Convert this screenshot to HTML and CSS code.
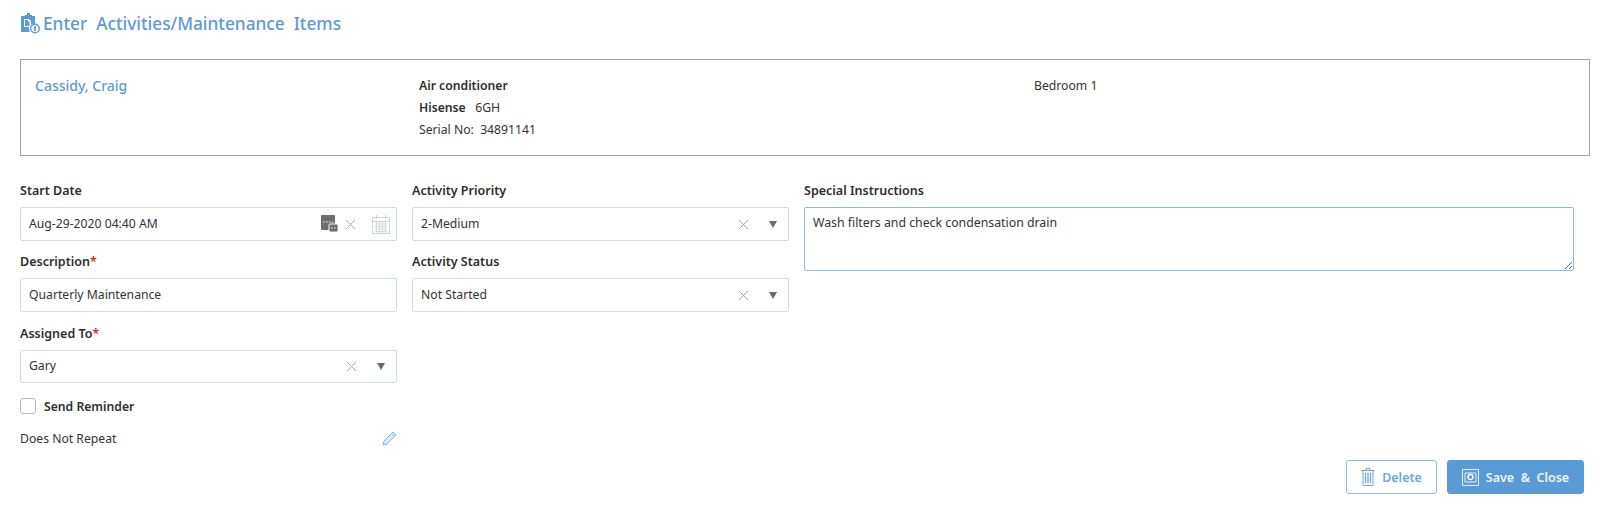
FILE: index.html
```html
<!DOCTYPE html>
<html lang="en">
<head>
    <meta charset="UTF-8">
    <title>Enter Activities/Maintenance Items</title>
    <link rel="stylesheet" href="styles.css">
</head>
<body>
    <h1 class="title">
        <svg class="title-icon" width="20" height="21" viewBox="0 0 20 21">
            <path fill="#5b9bd5" d="M2 3h3V2h2V0h3v2h2v1h3v8a5 5 0 0 0-5 8H2a1 1 0 0 1-1-1V4a1 1 0 0 1 1-1z"/>
            <path fill="#fff" d="M4 6h5l2 2v6H4z"/>
            <path fill="#5b9bd5" d="M5 7h3v1.500h1.500V13H5z"/>
            <circle cx="15" cy="15.500" r="4.300" fill="#fff" stroke="#5b9bd5" stroke-width="1.400"/>
            <path stroke="#5b9bd5" stroke-width="1.800" d="M15 13v5"/>
        </svg>
        <span>Enter&nbsp; Activities/Maintenance&nbsp; Items</span>
    </h1>

    <div class="info-box">
        <a class="info-name">Cassidy, Craig</a>
        <div class="info-item">
            <div class="strong">Air conditioner</div>
            <div><span class="strong">Hisense</span>&nbsp;&nbsp; 6GH</div>
            <div>Serial No:&nbsp; 34891141</div>
        </div>
        <div class="info-room">Bedroom 1</div>
    </div>

    <div class="form">
        <div class="col">
            <label>Start Date</label>
            <div class="field">
                <span class="value">Aug-29-2020 04:40 AM</span>
                <svg class="tz-icon" width="17" height="18" viewBox="0 0 17 18">
                    <path fill="#6d6d6d" d="M1 0h12a1 1 0 0 1 1 1v10H9v4H1a1 1 0 0 1-1-1V1a1 1 0 0 1 1-1z"/>
                    <rect x="8" y="9" width="9" height="8" rx="1" fill="#6d6d6d" stroke="#fff"/>
                    <path stroke="#fff" stroke-dasharray="1.500 1.500" d="M2 7h10M10 13h6"/>
                </svg>
                <svg class="x-icon" width="11" height="11" viewBox="0 0 11 11"><path d="M1 1l9 9M10 1l-9 9"/></svg>
                <svg class="cal-icon" width="18" height="20" viewBox="0 0 18 20">
                    <path fill="none" stroke="#cfd4d8" d="M.5 3.500h17v16H.500zM.5 7.500h17M4.500 1v4M13.500 1v4"/>
                    <path fill="none" stroke="#d5d9dc" d="M3 10h12M3 12.500h12M3 15h12M3 17.500h12M4.500 8v11M7.500 8v11M10.500 8v11M13.500 8v11"/>
                </svg>
            </div>
            <label>Description<span class="req">*</span></label>
            <div class="field desc"><span class="value">Quarterly Maintenance</span></div>
            <label>Assigned To<span class="req">*</span></label>
            <div class="field short">
                <span class="value">Gary</span>
                <svg class="x-icon" width="11" height="11" viewBox="0 0 11 11"><path d="M1 1l9 9M10 1l-9 9"/></svg>
                <span class="caret"></span>
            </div>
            <div class="check-row">
                <span class="checkbox"></span>
                <span class="strong">Send Reminder</span>
            </div>
            <div class="repeat-row">
                <span>Does Not Repeat</span>
                <svg width="15" height="15" viewBox="0 0 15 15">
                    <path fill="#dbe9f6" stroke="#7fb0dd" stroke-width=".9" d="M11 1l3 3-9 9-4 1 1-4z"/>
                    <path stroke="#7fb0dd" stroke-width=".9" d="M9.500 2.500l3 3"/>
                </svg>
            </div>
        </div>
        <div class="col">
            <label>Activity Priority</label>
            <div class="field">
                <span class="value">2-Medium</span>
                <svg class="x-icon" width="11" height="11" viewBox="0 0 11 11"><path d="M1 1l9 9M10 1l-9 9"/></svg>
                <span class="caret"></span>
            </div>
            <label>Activity Status</label>
            <div class="field">
                <span class="value">Not Started</span>
                <svg class="x-icon" width="11" height="11" viewBox="0 0 11 11"><path d="M1 1l9 9M10 1l-9 9"/></svg>
                <span class="caret"></span>
            </div>
        </div>
        <div class="col">
            <label>Special Instructions</label>
            <textarea class="notes">Wash filters and check condensation drain</textarea>
        </div>
    </div>

    <div class="actions">
        <button class="btn btn-outline">
            <svg width="14" height="18" viewBox="0 0 14 18">
                <path fill="none" stroke="#6ea6da" d="M.5 2.500h13M2 3v13.500a1 1 0 0 0 1 1h8a1 1 0 0 0 1-1V3M5 2.500V.5h4v2"/>
                <path stroke="#6ea6da" stroke-width="1.300" d="M4.500 5v10M7 5v10M9.500 5v10"/>
            </svg>
            Delete
        </button>
        <button class="btn btn-primary">
            <svg width="17" height="17" viewBox="0 0 17 17">
                <path fill="none" stroke="#e4eff9" d="M.5.5h16v16H.500z"/>
                <path fill="none" stroke="#e4eff9" d="M3 4h11v9H3z"/>
                <circle cx="8.500" cy="8" r="2.500" fill="none" stroke="#fff" stroke-width="1.300"/>
            </svg>
            Save&nbsp; &amp;&nbsp; Close
        </button>
    </div>
</body>
</html>
```

FILE: styles.css
```css
*{
    margin: 0;
    padding: 0;
    box-sizing: border-box;
}
body{
    font-family: "Noto Sans", "Open Sans", sans-serif;
    font-size: 12.2px;
    color: #333;
    background: #fff;
    padding: 13px 10px 0 20px;
    height: 517px;
    overflow: hidden;
}
.title{
    display: flex;
    align-items: center;
    gap: 3px;
    height: 21px;
    font-size: 17.25px;
    font-weight: 500;
    color: #5b9bd5;
}
.info-box{
    display: grid;
    grid-template-columns: 384px 615px 1fr;
    height: 97px;
    margin: 25px 0 0;
    padding: 15px 14px 0;
    border: 1px solid #a3a3a3;
    line-height: 22px;
}
.info-name{
    font-size: 14px;
    font-weight: 500;
    color: #5b9bd5;
}
.strong{
    font-weight: 600;
    color: #2e2e2e;
}
.form{
    display: grid;
    grid-template-columns: 377px 377px 770px;
    gap: 15px;
    margin-top: 25px;
}
.col{
    display: flex;
    flex-direction: column;
}
label{
    display: block;
    height: 21px;
    margin-bottom: 5px;
    font-size: 12.5px;
    line-height: 20px;
    font-weight: 600;
    color: #2e2e2e;
}
.req{
    color: #e02020;
}
.field{
    display: flex;
    align-items: center;
    height: 34px;
    margin-bottom: 11px;
    padding: 0 8px 2px 8px;
    border: 1px solid #d2dde6;
    border-radius: 2px;
}
.field.desc{
    margin-bottom: 12px;
}
.field.short{
    height: 33px;
    margin-bottom: 14px;
}
.value{
    flex: 1;
}
.x-icon{
    margin-top: 2px;
    margin-left: 7px;
}
.x-icon path{
    stroke: #a9a9a9;
    fill: none;
}
.tz-icon{
    margin-top: 2px;
}
.cal-icon{
    margin: 2px -2px 0 16px;
}
.caret{
    width: 0;
    height: 0;
    margin: 2px 3px 0 20px;
    border-left: 4px solid transparent;
    border-right: 4px solid transparent;
    border-top: 7px solid #5f6b76;
}
.check-row{
    display: flex;
    align-items: center;
    gap: 8px;
    height: 18px;
}
.checkbox{
    width: 16px;
    height: 16px;
    border: 1px solid #b5bcc4;
    border-radius: 3px;
}
.repeat-row{
    display: flex;
    justify-content: space-between;
    align-items: center;
    margin-top: 14px;
    height: 18px;
}
.notes{
    display: block;
    width: 770px;
    height: 64px;
    padding: 6px 8px;
    font: inherit;
    font-size: 12.3px;
    color: #333;
    border: 1px solid #8dbbe6;
    border-radius: 2px;
    outline: none;
    resize: vertical;
}
.actions{
    display: flex;
    justify-content: flex-end;
    gap: 10px;
    margin: 13px 6px 0 0;
}
.btn{
    display: flex;
    align-items: center;
    justify-content: center;
    gap: 7px;
    height: 34px;
    border-radius: 3px;
    font-family: inherit;
    font-size: 12.5px;
    font-weight: 600;
}
.btn-outline{
    width: 91px;
    background: #fff;
    color: #6ea6da;
    border: 1px solid #8dbbe6;
}
.btn-primary{
    width: 137px;
    background: #5b9bd5;
    color: #eef5fb;
    border: 1px solid #5b9bd5;
}
```
